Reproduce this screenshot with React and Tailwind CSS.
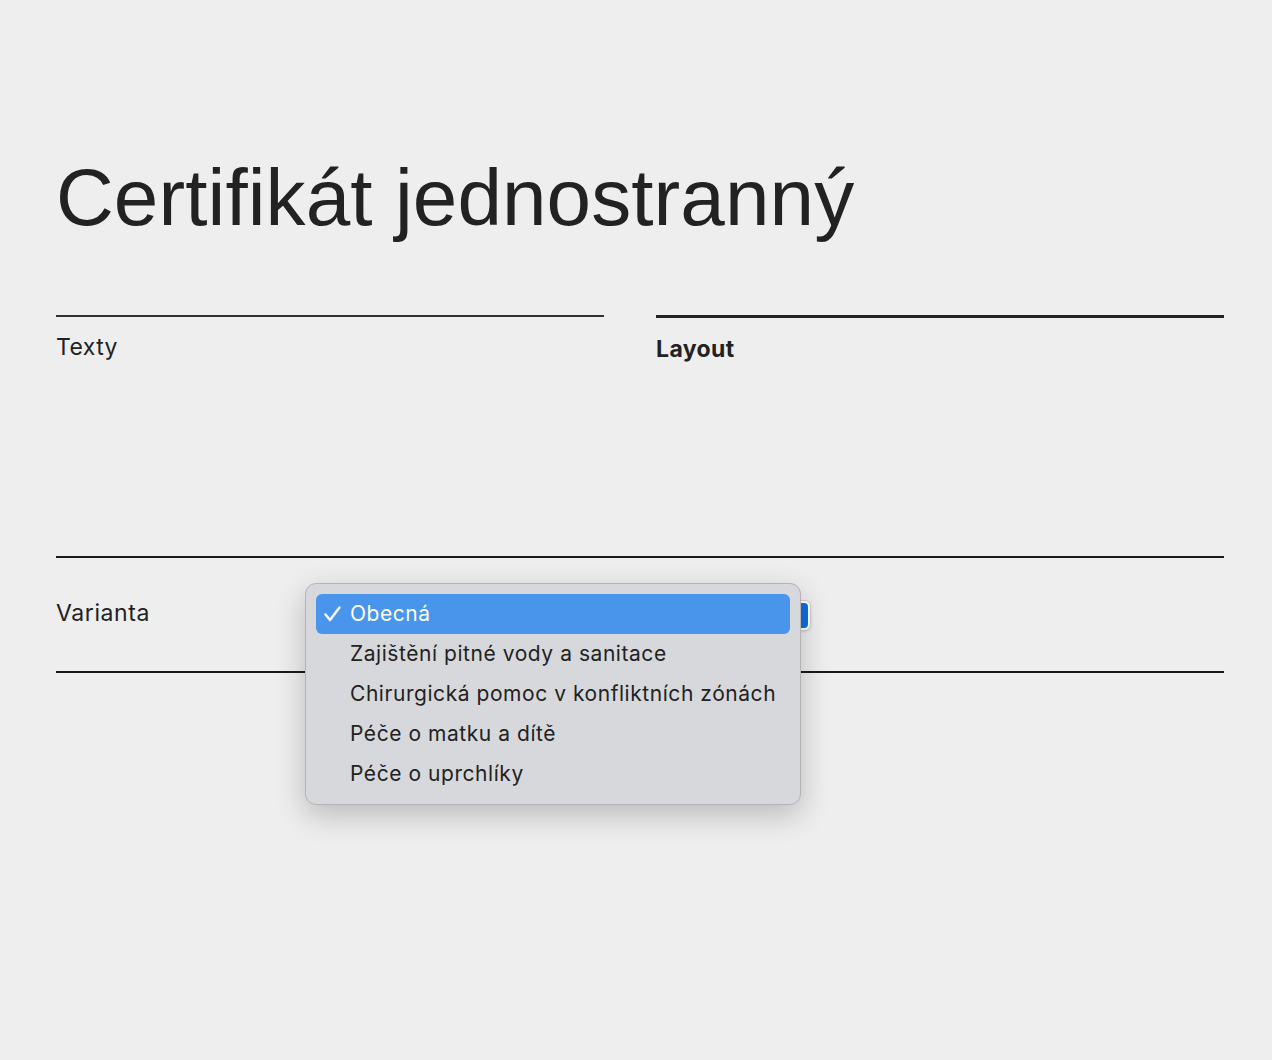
import React from "react";

const options = [
  "Obecná",
  "Zajištění pitné vody a sanitace",
  "Chirurgická pomoc v konfliktních zónách",
  "Péče o matku a dítě",
  "Péče o uprchlíky",
];

function CheckMark() {
  return (
    <svg width="17" height="16" viewBox="0 0 17 16" fill="none" className="shrink-0">
      <path d="M1.5 8.5 L6 14 L15.5 1.5" stroke="white" strokeWidth="2.4" strokeLinecap="round" strokeLinejoin="round" />
    </svg>
  );
}

export default function App() {
  return (
    <div className="min-h-screen bg-[#eeeeee] pl-14 pr-12 pt-[158px] text-[#222222] font-['Liberation_Sans',Arial,sans-serif]">
      <h1 className="text-[80px] leading-none tracking-[0.1px] font-normal">Certifikát jednostranný</h1>

      <div className="mt-[77px] flex gap-[52px] h-[241px]">
        <div className="w-[548px] border-t-2 border-[#333333] pt-[16px]">
          <span className="text-[23px] leading-7 tracking-[0.4px] font-['Inter',sans-serif]">Texty</span>
        </div>
        <div className="flex-1 border-t-[3px] border-[#222222] pt-[17px]">
          <span className="text-[23px] leading-7 tracking-[0.4px] font-bold font-['Inter',sans-serif]">Layout</span>
        </div>
      </div>

      <div className="relative border-t-2 border-b-2 border-[#1a1a1a] h-[117px] flex items-center">
        <span className="text-[23px] leading-7 tracking-[0.6px] font-['Inter',sans-serif] -mt-[4px]">Varianta</span>

        <div className="absolute left-[274px] top-[42px] w-[481px] h-[31px] rounded-md bg-white border border-[#d0d0d0] shadow-sm flex justify-end p-[2px]">
          <div className="w-[14px] h-full rounded-[4px] bg-[#0b6fe0]" />
        </div>

        <div className="absolute left-[249px] top-[25px] w-[496px] rounded-[11px] bg-[#d7d8dc] border border-[#b4b4b8] p-[10px] shadow-[0_10px_30px_rgba(0,0,0,0.22)] font-['Inter',sans-serif]">
          {options.map((o, i) => (
            <div
              key={o}
              className={
                i === 0
                  ? "h-10 rounded-[6px] bg-[#4a95ec] text-white flex items-center pl-[8px]"
                  : "h-10 flex items-center pl-[34px] text-[#222222]"
              }
            >
              {i === 0 && <CheckMark />}
              <span className={i === 0 ? "ml-[9px] text-[21px] tracking-[0.55px]" : "text-[21px] tracking-[0.55px]"}>{o}</span>
            </div>
          ))}
        </div>
      </div>
    </div>
  );
}
